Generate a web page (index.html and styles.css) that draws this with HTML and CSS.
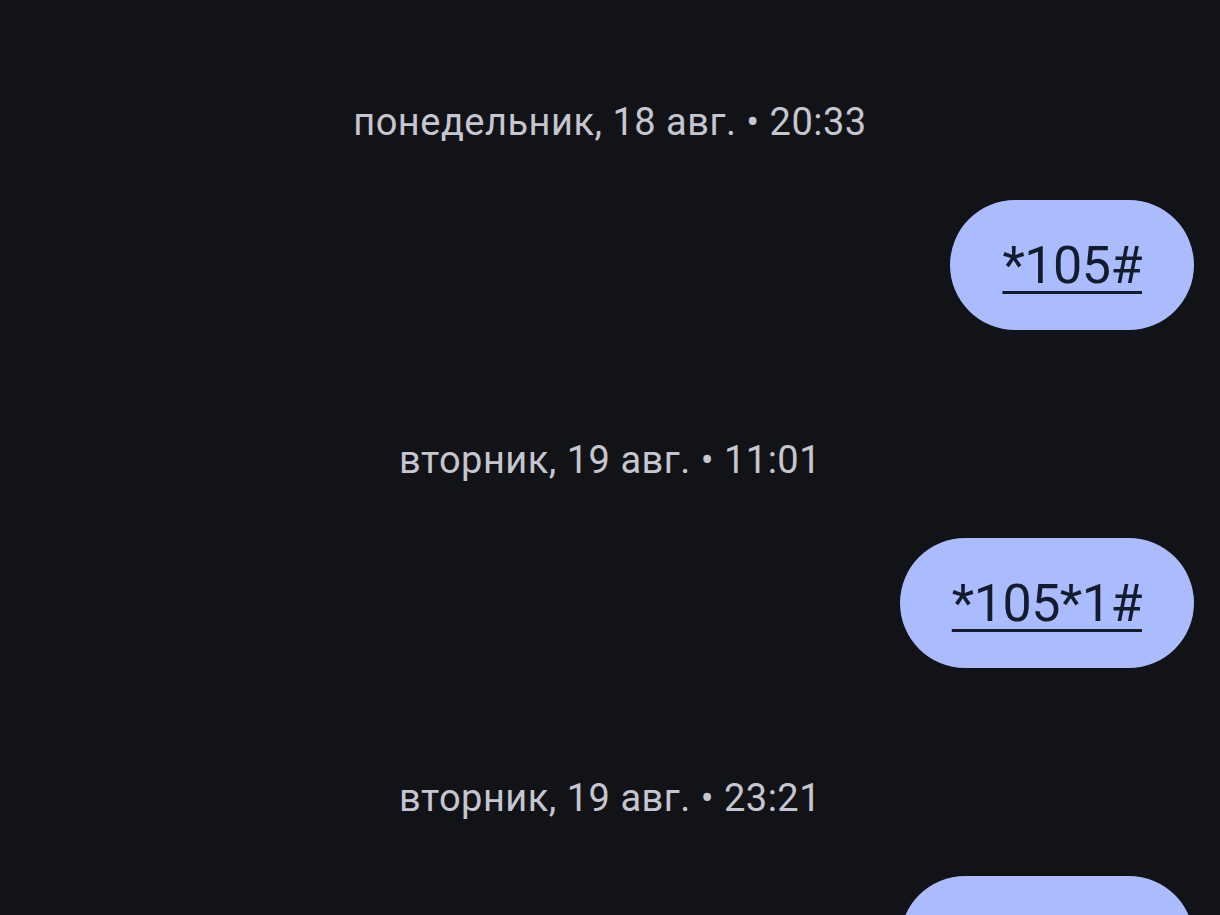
FILE: index.html
```html
<!DOCTYPE html>
<html lang="ru">
<head>
  <meta charset="UTF-8" />
  <meta name="viewport" content="width=device-width, initial-scale=1" />
  <title>Сообщения</title>
  <link rel="stylesheet" href="styles.css">
</head>
<body>

<div class="thread">
  <div class="group">
    <div class="stamp">понедельник, 18 авг. • 20:33</div>
    <div class="row"><div class="bubble"><a href="#">*105#</a></div></div>
  </div>
  <div class="group">
    <div class="stamp">вторник, 19 авг. • 11:01</div>
    <div class="row"><div class="bubble"><a href="#">*105*1#</a></div></div>
  </div>
  <div class="group">
    <div class="stamp">вторник, 19 авг. • 23:21</div>
    <div class="row"><div class="bubble"><a href="#">*105*2#</a></div></div>
  </div>
</div>

</body>
</html>
```

FILE: styles.css
```css
body {
  margin: 0;
  background: #121317;
  font-family: Roboto, "Noto Sans", sans-serif;
  height: 915px;
  overflow: hidden;
}

.thread {
  padding-top: 98px;
}

.group {
  margin-bottom: 106px;
}

.stamp {
  text-align: center;
  color: #c5c6d0;
  font-size: 38px;
  letter-spacing: 0.5px;
  line-height: 48px;
  margin-bottom: 54px;
}

.row {
  display: flex;
  justify-content: flex-end;
  padding-right: 26px;
}

.bubble {
  background: #aabcfe;
  height: 130px;
  padding: 0 52px;
  border-radius: 65px;
  display: flex;
  align-items: center;
  font-size: 52px;
  letter-spacing: -0.5px;
}

.bubble a {
  color: #141b2c;
  text-decoration: underline;
  text-decoration-thickness: 3px;
  text-underline-offset: 8px;
}
```
